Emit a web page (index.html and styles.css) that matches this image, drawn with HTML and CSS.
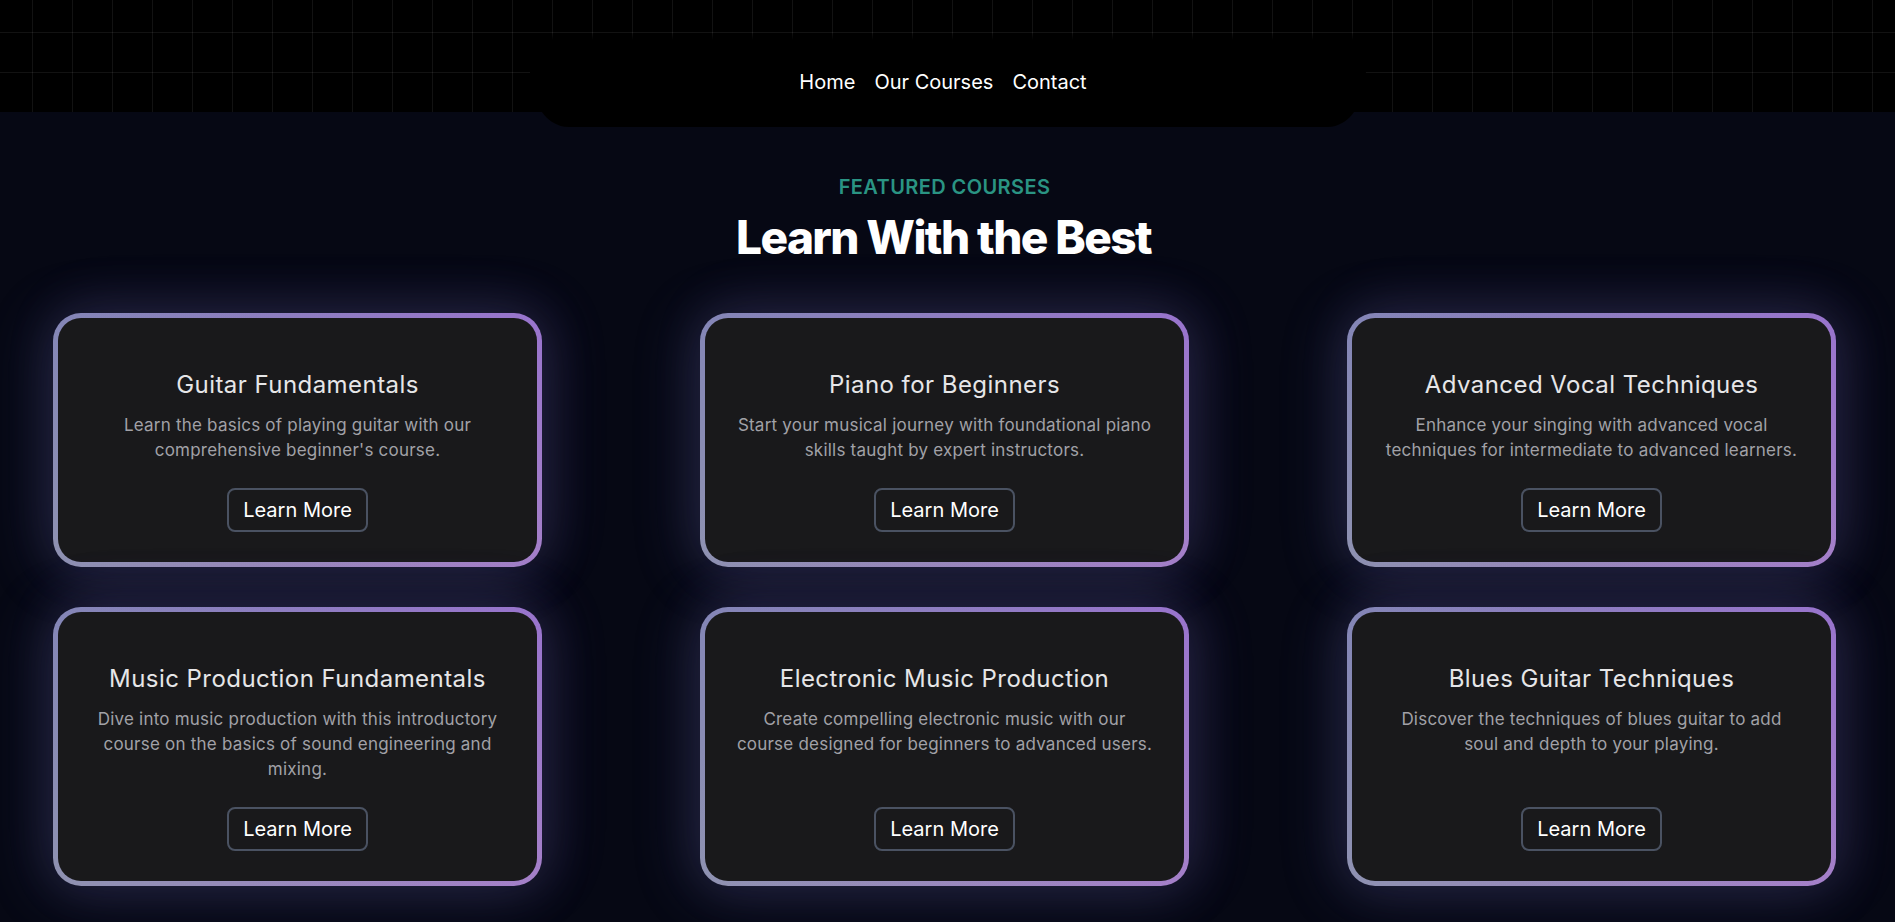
FILE: index.html
```html
<!DOCTYPE html>
<html lang="en">
<head>
<meta charset="utf-8">
<title>Learn With the Best</title>
<link rel="stylesheet" href="styles.css">
</head>
<body>
  <header class="site-header">
    <div class="nav-pill">
      <nav class="nav">
        <a href="#" class="nav-link">Home</a>
        <a href="#" class="nav-link">Our Courses</a>
        <a href="#" class="nav-link">Contact</a>
      </nav>
    </div>
  </header>

  <main class="featured">
    <p class="eyebrow">FEATURED COURSES</p>
    <h1 class="headline">Learn With the Best</h1>

    <section class="course-grid">
      <article class="card">
        <h2 class="card-title">Guitar Fundamentals</h2>
        <p class="card-text">Learn the basics of playing guitar with our<br>comprehensive beginner's course.</p>
        <a href="#" class="btn">Learn More</a>
      </article>
      <article class="card">
        <h2 class="card-title">Piano for Beginners</h2>
        <p class="card-text">Start your musical journey with foundational piano<br>skills taught by expert instructors.</p>
        <a href="#" class="btn">Learn More</a>
      </article>
      <article class="card">
        <h2 class="card-title">Advanced Vocal Techniques</h2>
        <p class="card-text">Enhance your singing with advanced vocal<br>techniques for intermediate to advanced learners.</p>
        <a href="#" class="btn">Learn More</a>
      </article>
      <article class="card">
        <h2 class="card-title">Music Production Fundamentals</h2>
        <p class="card-text">Dive into music production with this introductory<br>course on the basics of sound engineering and<br>mixing.</p>
        <a href="#" class="btn">Learn More</a>
      </article>
      <article class="card">
        <h2 class="card-title">Electronic Music Production</h2>
        <p class="card-text">Create compelling electronic music with our<br>course designed for beginners to advanced users.</p>
        <a href="#" class="btn">Learn More</a>
      </article>
      <article class="card">
        <h2 class="card-title">Blues Guitar Techniques</h2>
        <p class="card-text">Discover the techniques of blues guitar to add<br>soul and depth to your playing.</p>
        <a href="#" class="btn">Learn More</a>
      </article>
    </section>
  </main>
</body>
</html>
```

FILE: styles.css
```css
* {
  box-sizing: border-box;
}

html, body {
  margin: 0;
  padding: 0;
}

body {
  background: #060814;
  font-family: Inter, "Noto Sans", "Liberation Sans", sans-serif;
  color: #fff;
  min-height: 922px;
}

/* Header with grid pattern */
.site-header {
  height: 112px;
  background-color: #000;
  background-image:
    linear-gradient(to right, rgba(255, 255, 255, 0.07) 1px, transparent 1px),
    linear-gradient(to bottom, rgba(255, 255, 255, 0.07) 1px, transparent 1px);
  background-size: 40px 40px;
  background-position: 32px 32px;
  display: flex;
  justify-content: center;
  position: relative;
  z-index: 2;
}

.nav-pill {
  width: 836px;
  height: 127px;
  flex-shrink: 0;
  background: linear-gradient(to bottom, rgba(0, 0, 0, 0) 0, rgba(0, 0, 0, 0) 33px, #000 40px, #000 100%);
  border-radius: 0 0 38px 38px / 0 0 55px 55px;
  display: flex;
  justify-content: center;
  padding-top: 68px;
  padding-right: 9px;
}

.nav {
  display: flex;
  gap: 19px;
  height: 28px;
}

.nav-link {
  color: #fff;
  text-decoration: none;
  font-size: 20px;
  line-height: 28px;
}

/* Featured section */
.featured {
  padding-top: 61px;
  padding-bottom: 40px;
  display: flex;
  flex-direction: column;
  align-items: center;
}

.eyebrow {
  margin: 0;
  font-size: 20px;
  line-height: 28px;
  font-weight: 600;
  letter-spacing: 0.02em;
  color: #2a9483;
  transform: translateX(-3px);
}

.headline {
  margin: 12px 0 0;
  font-size: 46px;
  line-height: 48px;
  font-weight: 800;
  letter-spacing: -0.035em;
  color: #fff;
  transform: translateX(-4px);
}

.course-grid {
  width: 100%;
  margin-top: 52px;
  padding: 0 59px 0 53px;
  display: grid;
  grid-template-columns: repeat(3, 1fr);
  column-gap: 158px;
  row-gap: 40px;
}

.card {
  border: 5px solid transparent;
  border-radius: 28px;
  background:
    linear-gradient(#19191b, #19191b) padding-box,
    linear-gradient(to bottom, rgba(120, 80, 225, 0.16), rgba(205, 160, 200, 0.12)) border-box,
    linear-gradient(to right, #8690ae, #9f7bc9) border-box;
  box-shadow:
    -8px 4px 55px 6px rgba(105, 115, 175, 0.2),
    10px -4px 55px 4px rgba(140, 105, 220, 0.14);
  padding: 51px 24px 30px;
  display: flex;
  flex-direction: column;
  align-items: center;
  text-align: center;
}

.card-title {
  margin: 0;
  font-size: 24px;
  line-height: 32px;
  font-weight: 400;
  letter-spacing: 0.45px;
  color: #e6e6e8;
}

.card-text {
  margin: 12px 0 0;
  font-size: 17px;
  line-height: 25px;
  letter-spacing: 0.22px;
  color: #a1a1a7;
  flex-grow: 1;
}

.btn {
  margin-top: 25px;
  display: inline-block;
  padding: 6px 14px;
  border: 2px solid #4a5262;
  border-radius: 8px;
  color: #fff;
  text-decoration: none;
  font-size: 20px;
  line-height: 28px;
}
```
